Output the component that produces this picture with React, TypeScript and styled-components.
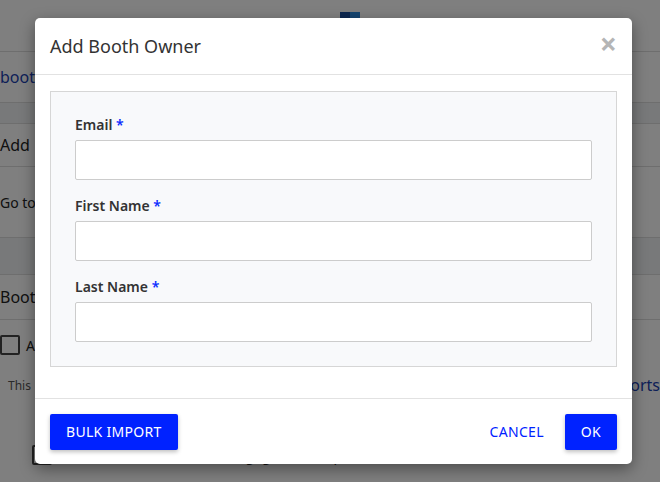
import React from "react";
import styled, { createGlobalStyle } from "styled-components";

const Global = createGlobalStyle`
  html, body { margin: 0; padding: 0; width: 660px; height: 482px; overflow: hidden; }
  body { font-family: "Noto Sans", "Open Sans", sans-serif; color: #333; }
`;

const Page = styled.div`
  position: relative;
  width: 660px;
  height: 482px;
  background: #fff;
  overflow: hidden;
`;

const BgTop = styled.div`
  height: 52px;
  border-bottom: 1px solid #ddd;
  display: flex;
  justify-content: center;
  padding-top: 12px;
  box-sizing: border-box;
`;
const BgLogo = styled.div`
  width: 20px; height: 10px; margin-left: 40px;
  background: linear-gradient(90deg, #1b4fa0 50%, #2a8be0 50%);
`;
const BgRow = styled.div<{ $h: number; $band?: boolean }>`
  height: ${p => p.$h}px;
  display: flex;
  align-items: center;
  font-size: ${p => (p.$band ? 16 : 14)}px;
  background: ${p => (p.$band ? "#f0f2f5" : "#fff")};
  border-bottom: 1px solid #ddd;
  color: #222;
  white-space: nowrap;
`;
const BgLink = styled.span` color: #1a3fb0; font-size: 16px;`;
const BgCheck = styled.span<{ $x: number }>`
  display: inline-block; width: 16px; height: 16px; border: 2px solid #444;
  border-radius: 2px; margin: 0 6px 0 ${p => p.$x}px;
`;
const BgNote = styled.div`
  display: flex; justify-content: space-between; font-size: 12px; color: #555;
  padding: 0 0 0 8px; height: 30px; align-items: center;
`;

const Overlay = styled.div`
  position: absolute; inset: 0;
  background: rgba(0, 0, 0, 0.5);
`;

const Modal = styled.div`
  position: absolute;
  left: 35px; top: 18px;
  width: 597px; height: 446px;
  background: #fff;
  border-radius: 5px;
  box-shadow: 0 5px 15px rgba(0,0,0,0.4);
  display: flex; flex-direction: column;
`;
const Header = styled.div`
  height: 56px;
  border-bottom: 1px solid #e2e2e2;
  display: flex; align-items: center; justify-content: space-between;
  padding: 0 15px;
`;
const Title = styled.h4`
  margin: 0; font-size: 18px; font-weight: 400; color: #333;
`;
const Close = styled.span`
  font-size: 30px; font-weight: 700; color: #b5b5b5; line-height: 1; margin-top: -4px;
`;
const Body = styled.div`
  padding: 16px 15px 31px;
  border-bottom: 1px solid #e2e2e2;
`;
const Panel = styled.div`
  background: #f8f9fb;
  border: 1px solid #d6d6d6;
  padding: 24px 24px 24px 24px;
  display: flex; flex-direction: column; gap: 17px;
  height: 276px; box-sizing: border-box;
`;
const Field = styled.div` display: flex; flex-direction: column; gap: 6px; `;
const Label = styled.label`
  font-size: 14px; font-weight: 600; color: #333; line-height: 18px;
  span { color: #0a2cff; }
`;
const Input = styled.input`
  height: 40px; box-sizing: border-box; border: 1px solid #ccc; border-radius: 2px;
  background: #fff; width: 100%;
`;
const Footer = styled.div`
  flex: 1; display: flex; align-items: center; justify-content: space-between;
  padding: 0 15px;
`;
const Right = styled.div` display: flex; align-items: center; gap: 21px; `;
const Btn = styled.button<{ $flat?: boolean }>`
  height: 36px; border: none; border-radius: 2px;
  font-family: "Noto Sans", sans-serif; font-size: 14px; letter-spacing: 0.3px;
  background: ${p => (p.$flat ? "transparent" : "#0022ff")};
  color: ${p => (p.$flat ? "#0022ff" : "#fff")};
  box-shadow: ${p => (p.$flat ? "none" : "0 2px 4px rgba(0,0,0,0.25)")};
  padding: ${p => (p.$flat ? "0" : "0 16px")};
`;

export default function App() {
  return (
    <Page>
      <Global />
      <BgTop><BgLogo /></BgTop>
      <BgRow $h={50}><BgLink>booth</BgLink></BgRow>
      <BgRow $h={20} $band />
      <BgRow $h={42}><span style={{ fontSize: 16 }}>Add</span></BgRow>
      <BgRow $h={70}>Go to</BgRow>
      <BgRow $h={36} $band />
      <BgRow $h={44}><span style={{ fontSize: 16 }}>Booth</span></BgRow>
      <BgRow $h={50} style={{ borderBottom: "none" }}><BgCheck $x={0} />Al</BgRow>
      <BgNote><span>This</span><BgLink>ports</BgLink></BgNote>
      <BgRow $h={40} style={{ borderBottom: "none" }} />
      <BgRow $h={30} style={{ borderBottom: "none" }}><BgCheck $x={32} />Allow access to the Booth Engagement Report</BgRow>
      <Overlay />
      <Modal>
        <Header>
          <Title>Add Booth Owner</Title>
          <Close>×</Close>
        </Header>
        <Body>
          <Panel>
            <Field><Label>Email <span>*</span></Label><Input /></Field>
            <Field><Label>First Name <span>*</span></Label><Input /></Field>
            <Field><Label>Last Name <span>*</span></Label><Input /></Field>
          </Panel>
        </Body>
        <Footer>
          <Btn>BULK IMPORT</Btn>
          <Right>
            <Btn $flat>CANCEL</Btn>
            <Btn>OK</Btn>
          </Right>
        </Footer>
      </Modal>
    </Page>
  );
}
